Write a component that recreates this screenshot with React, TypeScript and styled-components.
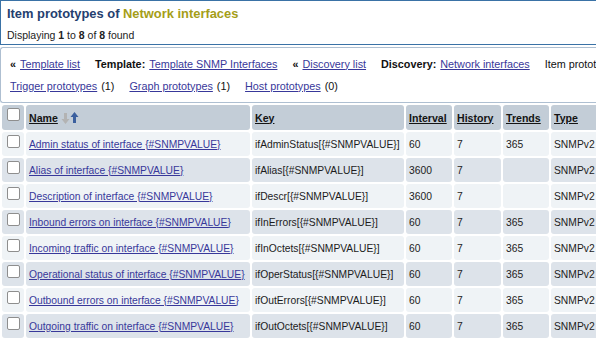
import React from "react";
import styled, { createGlobalStyle } from "styled-components";

const Global = createGlobalStyle`
  html, body { margin: 0; padding: 0; overflow: hidden; background: #fff; }
  body { font-family: "Liberation Sans", Arial, sans-serif; font-size: 10.8px; color: #1c1c1c; }
`;

const Page = styled.div`
  width: 760px;
`;

const TitleBox = styled.div`
  border: 1px solid #3a72a6;
  border-right: none;
  height: 43px;
  padding: 0 6px;
  display: flex;
  flex-direction: column;
`;

const Title = styled.h1`
  margin: 0;
  font-size: 12.9px;
  font-weight: bold;
  color: #24406f;
  line-height: 16px;
  padding-top: 5px;
`;

const Accent = styled.span`
  color: #a59e17;
`;

const Summary = styled.div`
  margin-top: 6px;
  line-height: 14px;
  font-size: 10.5px;
  color: #222;
`;

const NavBox = styled.div`
  margin-top: 2px;
  border: 1px solid #aebfd1;
  border-right: none;
  border-radius: 3px 0 0 3px;
  height: 54px;
  padding: 0 9px;
  display: flex;
  flex-direction: column;
  justify-content: center;
  gap: 9px;
`;

const NavRow = styled.div`
  display: flex;
  gap: 15px;
  white-space: nowrap;
  line-height: 13px;
  color: #111;
`;

const NavItem = styled.span`
  display: inline-flex;
  gap: 4px;
`;

const Label = styled.b`
  font-weight: bold;
`;

const Link = styled.a`
  color: #38389a;
  text-decoration: underline;
  cursor: pointer;
`;

const Table = styled.table`
  border-collapse: separate;
  border-spacing: 2px;
  table-layout: fixed;
  width: 633px;
  font-size: 10.3px;
`;

const HeadCell = styled.th`
  box-sizing: border-box;
  background: #c3cdd7;
  border-radius: 3px;
  height: 25px;
  padding: 0 3px;
  text-align: left;
  font-weight: bold;
  font-size: 10.6px;
  white-space: nowrap;
  overflow: hidden;
  vertical-align: middle;
`;

const HeadLink = styled.a`
  color: #141414;
  text-decoration: underline;
`;

const Cell = styled.td<{ $alt: boolean }>`
  box-sizing: border-box;
  background: ${(p) => (p.$alt ? "#dde3ea" : "#eff3f6")};
  border-radius: 3px;
  height: 24px;
  padding: 0 3px;
  white-space: nowrap;
  overflow: hidden;
  vertical-align: middle;
  color: #1c1c1c;
`;

const CheckCell = styled(Cell)`
  vertical-align: top;
  padding: 3px 0 0 5px;
`;

const HeadCheckCell = styled(HeadCell)`
  vertical-align: top;
  padding: 3px 0 0 5px;
`;

const Check = styled.span`
  display: block;
  width: 11px;
  height: 11px;
  border: 1px solid #8e8e8e;
  border-radius: 2px;
  background: #fff;
`;

const SortIcon = styled.svg`
  vertical-align: -3px;
  margin-left: 3px;
`;

const rows = [
  ["Admin status of interface {#SNMPVALUE}", "ifAdminStatus[{#SNMPVALUE}]", "60", "7", "365"],
  ["Alias of interface {#SNMPVALUE}", "ifAlias[{#SNMPVALUE}]", "3600", "7", ""],
  ["Description of interface {#SNMPVALUE}", "ifDescr[{#SNMPVALUE}]", "3600", "7", ""],
  ["Inbound errors on interface {#SNMPVALUE}", "ifInErrors[{#SNMPVALUE}]", "60", "7", "365"],
  ["Incoming traffic on interface {#SNMPVALUE}", "ifInOctets[{#SNMPVALUE}]", "60", "7", "365"],
  ["Operational status of interface {#SNMPVALUE}", "ifOperStatus[{#SNMPVALUE}]", "60", "7", "365"],
  ["Outbound errors on interface {#SNMPVALUE}", "ifOutErrors[{#SNMPVALUE}]", "60", "7", "365"],
  ["Outgoing traffic on interface {#SNMPVALUE}", "ifOutOctets[{#SNMPVALUE}]", "60", "7", "365"],
];

export default function App() {
  return (
    <Page>
      <Global />
      <TitleBox>
        <Title>
          Item prototypes of <Accent>Network interfaces</Accent>
        </Title>
        <Summary>
          Displaying <b>1</b> to <b>8</b> of <b>8</b> found
        </Summary>
      </TitleBox>
      <NavBox>
        <NavRow>
          <NavItem>
            <b>«</b>
            <Link>Template list</Link>
          </NavItem>
          <NavItem>
            <Label>Template:</Label>
            <Link>Template SNMP Interfaces</Link>
          </NavItem>
          <NavItem>
            <b>«</b>
            <Link>Discovery list</Link>
          </NavItem>
          <NavItem>
            <Label>Discovery:</Label>
            <Link>Network interfaces</Link>
          </NavItem>
          <NavItem>Item prototypes (8)</NavItem>
        </NavRow>
        <NavRow>
          <NavItem>
            <Link>Trigger prototypes</Link> (1)
          </NavItem>
          <NavItem>
            <Link>Graph prototypes</Link> (1)
          </NavItem>
          <NavItem>
            <Link>Host prototypes</Link> (0)
          </NavItem>
        </NavRow>
      </NavBox>
      <Table>
        <colgroup>
          <col style={{ width: 22 }} />
          <col style={{ width: 224 }} />
          <col style={{ width: 152 }} />
          <col style={{ width: 46 }} />
          <col style={{ width: 47 }} />
          <col style={{ width: 46 }} />
          <col style={{ width: 80 }} />
        </colgroup>
        <thead>
          <tr>
            <HeadCheckCell>
              <Check />
            </HeadCheckCell>
            <HeadCell>
              <HeadLink>Name</HeadLink>
              <SortIcon width="18" height="14" viewBox="0 0 18 14">
                <path d="M3 2h3v6h2.5L4.5 13 0.5 8H3z" fill="#b3b3b3" />
                <path d="M12 12h3V6h2.5L13.5 1 9.5 6H12z" fill="#3b5f9e" />
              </SortIcon>
            </HeadCell>
            <HeadCell>
              <HeadLink>Key</HeadLink>
            </HeadCell>
            <HeadCell>
              <HeadLink>Interval</HeadLink>
            </HeadCell>
            <HeadCell>
              <HeadLink>History</HeadLink>
            </HeadCell>
            <HeadCell>
              <HeadLink>Trends</HeadLink>
            </HeadCell>
            <HeadCell>
              <HeadLink>Type</HeadLink>
            </HeadCell>
          </tr>
        </thead>
        <tbody>
          {rows.map((r, i) => {
            const alt = i % 2 === 1;
            return (
              <tr key={r[0]}>
                <CheckCell $alt={alt}>
                  <Check />
                </CheckCell>
                <Cell $alt={alt}>
                  <Link>{r[0]}</Link>
                </Cell>
                <Cell $alt={alt}>{r[1]}</Cell>
                <Cell $alt={alt}>{r[2]}</Cell>
                <Cell $alt={alt}>{r[3]}</Cell>
                <Cell $alt={alt}>{r[4]}</Cell>
                <Cell $alt={alt}>SNMPv2 agent</Cell>
              </tr>
            );
          })}
        </tbody>
      </Table>
    </Page>
  );
}
